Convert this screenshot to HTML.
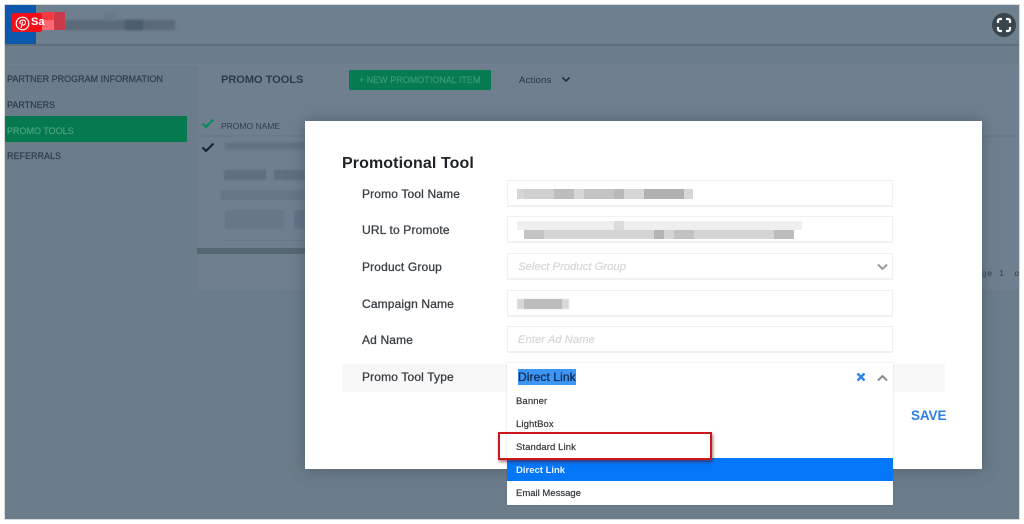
<!DOCTYPE html>
<html><head><meta charset="utf-8">
<style>
html,body{margin:0;padding:0;background:#fff}
body{width:1024px;height:524px;position:relative;overflow:hidden;font-family:"Liberation Sans",sans-serif}
.a{position:absolute}
.t{position:absolute;white-space:nowrap;line-height:1}
.nav{font-size:9px;color:#2b3a48;left:7px;-webkit-text-stroke:.15px #2b3a48}
.lab{font-size:12px;font-weight:400;color:#3a3f44;left:362px;letter-spacing:.15px;-webkit-text-stroke:.3px #3a3f44}
.inp{position:absolute;left:507px;width:384px;height:24px;border:1px solid #f1f1f1;border-bottom-width:2px;background:#fff}
.ph{font-size:11.3px;font-style:italic;color:#d4d6d8;left:518px;-webkit-text-stroke:.2px #d4d6d8}
.opt{font-size:9.5px;color:#33373b;left:516px;letter-spacing:.1px;-webkit-text-stroke:.2px #33373b}
.b{position:absolute;height:10px}
</style></head><body>
<div class="a" style="left:4px;top:4px;width:1016px;height:516px;background:#d9d9d9"></div>
<div class="a" style="left:5px;top:5px;width:1014px;height:514px;background:#6b7c8a;overflow:hidden"></div>

<!-- header -->
<div class="a" style="left:5px;top:5px;width:1014px;height:39px;background:#6e7f8e"></div>
<div class="a" style="left:5px;top:44px;width:1014px;height:2px;background:#5e6e7b"></div>
<div class="a" style="left:5px;top:64px;width:1014px;height:1px;background:#708190"></div>
<div class="a" style="left:5px;top:5px;width:31px;height:39px;background:#0b58ad"></div>
<div class="a" style="left:65px;top:20px;width:110px;height:10px;background:#596a79;filter:blur(1px)"></div>
<div class="a" style="left:105px;top:13px;width:10px;height:8px;background:#66788a;filter:blur(1px)"></div>
<div class="a" style="left:125px;top:20px;width:18px;height:10px;background:#4c5d6c;filter:blur(1px)"></div>
<div class="a" style="left:12px;top:13px;width:30px;height:19px;background:#f20f1a;border-radius:2px"></div>
<div class="a" style="left:42px;top:12px;width:11px;height:18px;background:#f23a44"></div>
<div class="a" style="left:42px;top:20px;width:12px;height:10px;background:#ff6670"></div>
<div class="a" style="left:54px;top:12px;width:11px;height:18px;background:#c93a4a"></div>
<svg class="a" style="left:15px;top:16px" width="15" height="15" viewBox="0 0 15 15"><circle cx="7.5" cy="7.5" r="6.3" fill="none" stroke="#fff" stroke-width="1.2"/><path d="M6 12 L7.6 5.5 M5.2 8 C4 5.5 6 3.8 8 3.9 C10.5 4 11 6.3 10 8 C9.2 9.4 7.6 9.3 7 8.3" fill="none" stroke="#fff" stroke-width="1.1"/></svg>
<div class="t" style="left:31px;top:17px;font-size:11px;font-weight:700;color:#fff">Sa</div>
<svg class="a" style="left:992px;top:13px" width="24" height="24" viewBox="0 0 24 24"><circle cx="12" cy="12" r="12" fill="#39444d"/><path d="M6 10V8a2 2 0 0 1 2-2h2M14 6h2a2 2 0 0 1 2 2v2M18 14v2a2 2 0 0 1-2 2h-2M10 18H8a2 2 0 0 1-2-2v-2" fill="none" stroke="#fff" stroke-width="2.2"/></svg>

<!-- sidebar -->
<div class="t nav" style="top:75px">PARTNER PROGRAM INFORMATION</div>
<div class="t nav" style="top:101px">PARTNERS</div>
<div class="a" style="left:5px;top:116px;width:182px;height:26px;background:#067a4e"></div>
<div class="t nav" style="top:127px;color:#4fa482;-webkit-text-stroke:.15px #4fa482">PROMO TOOLS</div>
<div class="t nav" style="top:152px">REFERRALS</div>

<!-- background panel -->
<div class="a" style="left:197px;top:65px;width:822px;height:225px;background:#707f8f"></div>
<div class="a" style="left:197px;top:135px;width:822px;height:2px;background:#6a7a8a"></div>
<div class="t" style="left:221px;top:75px;font-size:11px;font-weight:700;color:#2c3a48">PROMO TOOLS</div>
<div class="a" style="left:349px;top:70px;width:142px;height:20px;background:#067a50;border-radius:1px"></div>
<div class="t" style="left:359px;top:76px;font-size:9px;color:#3d9e78;-webkit-text-stroke:.15px #3d9e78">+ NEW PROMOTIONAL ITEM</div>
<div class="t" style="left:519px;top:76px;font-size:9.5px;color:#25364a;letter-spacing:.2px">Actions</div>
<svg class="a" style="left:561px;top:75px" width="10" height="9" viewBox="0 0 10 9"><path d="M1.5 2.5L5 6L8.5 2.5" fill="none" stroke="#1f2f42" stroke-width="1.6"/></svg>
<svg class="a" style="left:201px;top:117px" width="14" height="12" viewBox="0 0 14 12"><path d="M1.5 6.5L5 10L12.5 2.5" fill="none" stroke="#0a8a62" stroke-width="2.2"/></svg>
<svg class="a" style="left:201px;top:141px" width="14" height="12" viewBox="0 0 14 12"><path d="M1.5 6.5L5 10L12.5 2.5" fill="none" stroke="#15263c" stroke-width="2.2"/></svg>
<div class="t" style="left:221px;top:122px;font-size:8.5px;color:#2f3e4e">PROMO NAME</div>
<div class="a" style="left:225px;top:143px;width:80px;height:6px;background:#5f7080;filter:blur(1.5px)"></div>
<div class="a" style="left:224px;top:170px;width:42px;height:10px;background:#606f7f;filter:blur(.8px)"></div>
<div class="a" style="left:274px;top:170px;width:31px;height:10px;background:#606f7f;filter:blur(.8px)"></div>
<div class="a" style="left:221px;top:190px;width:84px;height:10px;background:#667686;filter:blur(.8px)"></div>
<div class="a" style="left:225px;top:210px;width:59px;height:19px;background:#677787;filter:blur(.8px)"></div>
<div class="a" style="left:294px;top:210px;width:11px;height:19px;background:#637385;filter:blur(.8px)"></div>
<div class="a" style="left:224px;top:240px;width:81px;height:1px;background:#677788"></div>
<div class="a" style="left:197px;top:248px;width:108px;height:6px;background:#566774"></div>
<div class="t" style="left:982px;top:270px;font-size:8px;color:#2f3e4e;letter-spacing:1px">ge&nbsp;&nbsp;1&nbsp;&nbsp;&nbsp;o</div>

<!-- modal -->
<div class="a" style="left:305px;top:121px;width:677px;height:348px;background:#fff;box-shadow:0 0 14px rgba(60,72,84,.55)"></div>
<div class="t" style="left:342px;top:156px;font-size:16px;font-weight:700;color:#1f2226;letter-spacing:.1px">Promotional Tool</div>

<div class="t lab" style="top:188px">Promo Tool Name</div>
<div class="t lab" style="top:224px">URL to Promote</div>
<div class="t lab" style="top:261px">Product Group</div>
<div class="t lab" style="top:298px">Campaign Name</div>
<div class="t lab" style="top:334px">Ad Name</div>

<div class="inp" style="top:180px"></div>
<div class="inp" style="top:216px"></div>
<div class="inp" style="top:253px"></div>
<div class="inp" style="top:290px"></div>
<div class="inp" style="top:326px"></div>

<!-- blurred input contents -->
<div class="b" style="left:517px;top:189px;width:176px;background:#d6d6d6"></div>
<div class="b" style="left:524px;top:189px;width:30px;background:#cfcfcf"></div>
<div class="b" style="left:554px;top:189px;width:20px;background:#bdbdbd"></div>
<div class="b" style="left:584px;top:189px;width:30px;background:#c4c4c4"></div>
<div class="b" style="left:614px;top:189px;width:10px;background:#b8b8b8"></div>
<div class="b" style="left:644px;top:189px;width:40px;background:#b0b0b0"></div>
<div class="b" style="left:517px;top:221px;width:285px;height:9px;background:#efefef"></div>
<div class="b" style="left:614px;top:221px;width:10px;height:9px;background:#dcdcdc"></div>
<div class="b" style="left:524px;top:230px;width:270px;height:9px;background:#d4d4d4"></div>
<div class="b" style="left:524px;top:230px;width:20px;height:9px;background:#c4c4c4"></div>
<div class="b" style="left:654px;top:230px;width:10px;height:9px;background:#b5b5b5"></div>
<div class="b" style="left:674px;top:230px;width:20px;height:9px;background:#c2c2c2"></div>
<div class="b" style="left:774px;top:230px;width:20px;height:9px;background:#bcbcbc"></div>
<div class="b" style="left:517px;top:299px;width:52px;background:#d8d8d8;filter:blur(.4px)"></div>
<div class="b" style="left:524px;top:299px;width:38px;background:#bdbdbd"></div>

<div class="t ph" style="top:262px">Select Product Group</div>
<svg class="a" style="left:876px;top:262px" width="13" height="10" viewBox="0 0 13 10"><path d="M2 2.5L6.5 7L11 2.5" fill="none" stroke="#9a9a9a" stroke-width="2"/></svg>
<div class="t ph" style="top:335px">Enter Ad Name</div>

<!-- promo tool type row -->
<div class="a" style="left:342px;top:364px;width:603px;height:28px;background:#f8f8f8"></div>
<div class="t lab" style="top:371px">Promo Tool Type</div>
<div class="a" style="left:507px;top:363px;width:386px;height:142px;background:#fff;box-shadow:0 0 2px rgba(0,0,0,.15)"></div>
<div class="a" style="left:518px;top:369px;width:58px;height:16px;background:#3d96f5"></div>
<div class="t" style="left:518px;top:371px;font-size:12px;color:#0f2a52;letter-spacing:.1px;-webkit-text-stroke:.25px #0f2a52">Direct Link</div>
<svg class="a" style="left:856px;top:372px" width="10" height="10" viewBox="0 0 10 10"><path d="M1.5 1.5L8.5 8.5M8.5 1.5L1.5 8.5" stroke="#2a85ea" stroke-width="2.4"/></svg>
<svg class="a" style="left:876px;top:373px" width="13" height="10" viewBox="0 0 13 10"><path d="M2 7.5L6.5 3L11 7.5" fill="none" stroke="#8a8a8a" stroke-width="2"/></svg>

<div class="t opt" style="top:397px">Banner</div>
<div class="t opt" style="top:420px">LightBox</div>
<div class="t opt" style="top:443px">Standard Link</div>
<div class="a" style="left:507px;top:458px;width:386px;height:23px;background:#0476f8"></div>
<div class="t opt" style="top:466px;color:#eaf3ff;font-weight:700;letter-spacing:0;-webkit-text-stroke:0">Direct Link</div>
<div class="t opt" style="top:489px;letter-spacing:0">Email Message</div>

<!-- red highlight -->
<div class="a" style="left:498px;top:432px;width:210px;height:24px;border:2px solid #c8181e;box-shadow:1px 2px 3px rgba(90,20,20,.55)"></div>

<div class="t" style="left:911px;top:409px;font-size:13.5px;font-weight:700;color:#2a80e8;letter-spacing:-.1px">SAVE</div>
</body></html>
